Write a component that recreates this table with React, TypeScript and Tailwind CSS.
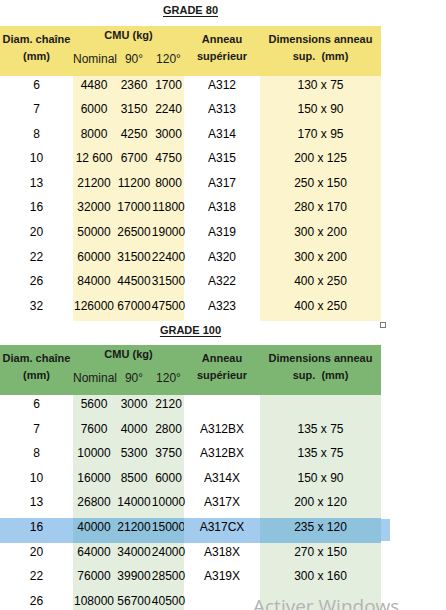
/**
 * Tableau élingues - Grade 80 / Grade 100
 * Feuille type Excel avec colonnes CMU et anneaux
 */

type Row = {
  diam: string;
  nominal: string;
  d90: string;
  d120: string;
  anneau: string;
  dims: string;
  selected?: boolean;
};

const grade80: Row[] = [
  { diam: '6', nominal: '4480', d90: '2360', d120: '1700', anneau: 'A312', dims: '130 x 75' },
  { diam: '7', nominal: '6000', d90: '3150', d120: '2240', anneau: 'A313', dims: '150 x 90' },
  { diam: '8', nominal: '8000', d90: '4250', d120: '3000', anneau: 'A314', dims: '170 x 95' },
  { diam: '10', nominal: '12 600', d90: '6700', d120: '4750', anneau: 'A315', dims: '200 x 125' },
  { diam: '13', nominal: '21200', d90: '11200', d120: '8000', anneau: 'A317', dims: '250 x 150' },
  { diam: '16', nominal: '32000', d90: '17000', d120: '11800', anneau: 'A318', dims: '280 x 170' },
  { diam: '20', nominal: '50000', d90: '26500', d120: '19000', anneau: 'A319', dims: '300 x 200' },
  { diam: '22', nominal: '60000', d90: '31500', d120: '22400', anneau: 'A320', dims: '300 x 200' },
  { diam: '26', nominal: '84000', d90: '44500', d120: '31500', anneau: 'A322', dims: '400 x 250' },
  { diam: '32', nominal: '126000', d90: '67000', d120: '47500', anneau: 'A323', dims: '400 x 250' },
];

const grade100: Row[] = [
  { diam: '6', nominal: '5600', d90: '3000', d120: '2120', anneau: '', dims: '' },
  { diam: '7', nominal: '7600', d90: '4000', d120: '2800', anneau: 'A312BX', dims: '135 x 75' },
  { diam: '8', nominal: '10000', d90: '5300', d120: '3750', anneau: 'A312BX', dims: '135 x 75' },
  { diam: '10', nominal: '16000', d90: '8500', d120: '6000', anneau: 'A314X', dims: '150 x 90' },
  { diam: '13', nominal: '26800', d90: '14000', d120: '10000', anneau: 'A317X', dims: '200 x 120' },
  { diam: '16', nominal: '40000', d90: '21200', d120: '15000', anneau: 'A317CX', dims: '235 x 120', selected: true },
  { diam: '20', nominal: '64000', d90: '34000', d120: '24000', anneau: 'A318X', dims: '270 x 150' },
  { diam: '22', nominal: '76000', d90: '39900', d120: '28500', anneau: 'A319X', dims: '300 x 160' },
  { diam: '26', nominal: '108000', d90: '56700', d120: '40500', anneau: '', dims: '' },
];

function Header({ green }: { green?: boolean }) {
  return (
    <div
      className={`grid grid-cols-[73px_111px_76px_121px] h-[49.5px] text-[11px] font-bold text-[#1a1a1a] ${
        green ? 'bg-[#7db672]' : 'bg-[#f4e27b]'
      }`}
    >
      <div className="pt-[5px] text-center leading-[17px] whitespace-nowrap">
        Diam. chaîne
        <br />
        (mm)
      </div>
      <div className="pt-[1px] leading-[17px]">
        <div className="text-center">CMU (kg)</div>
        <div className="mt-[7px] grid grid-cols-[42px_38px_31px] text-[12px] font-normal">
          <span className="text-center">Nominal</span>
          <span className="text-center">90°</span>
          <span className="text-center">120°</span>
        </div>
      </div>
      <div className="pt-[5px] text-center leading-[17px]">
        Anneau
        <br />
        supérieur
      </div>
      <div className="pt-[5px] text-center leading-[17px] whitespace-pre">
        {'Dimensions anneau\nsup.  (mm)'}
      </div>
    </div>
  );
}

function DataRow({ row, green }: { row: Row; green?: boolean }) {
  const light = green ? 'bg-[#e3eedf]' : 'bg-[#fbf4cc]';
  const selWhite = 'bg-[#a2cbee]';
  const selTint = 'bg-[#8fc2dc]';
  return (
    <div className="relative grid grid-cols-[73px_111px_76px_121px] h-[24.6px] text-[12px] leading-[18px] text-black">
      <div className={`text-center ${row.selected ? selWhite : ''}`}>{row.diam}</div>
      <div className={`grid grid-cols-[42px_38px_31px] ${row.selected ? selTint : light}`}>
        <span className="flex justify-center whitespace-nowrap">{row.nominal}</span>
        <span className="flex justify-center whitespace-nowrap">{row.d90}</span>
        <span className="flex justify-center whitespace-nowrap">{row.d120}</span>
      </div>
      <div className={`text-center ${row.selected ? selWhite : ''}`}>{row.anneau}</div>
      <div className={`text-center ${row.selected ? selTint : light}`}>{row.dims}</div>
      {row.selected && (
        <div className="absolute left-full top-[1px] h-[22.5px] w-[9px] bg-[#a4cdf0]" />
      )}
    </div>
  );
}

export default function App() {
  return (
    <div className="relative h-[610px] w-[446px] overflow-hidden bg-white font-['Liberation_Sans',Arial,sans-serif]">
      <div className="w-[381px]">
        <div className="h-[26px] text-center text-[11px] font-bold leading-[20px] text-[#1a1a1a]">
          <span className="underline underline-offset-2">GRADE 80</span>
        </div>
        <Header />
        {grade80.map((r) => (
          <DataRow key={r.diam} row={r} />
        ))}

        <div className="relative h-[24px] text-center text-[11px] font-bold leading-[18px] text-[#1a1a1a]">
          <span className="underline underline-offset-2">GRADE 100</span>
          <div className="absolute left-[380px] top-[1px] h-[6px] w-[6px] border border-[#7a7a7a] bg-white" />
        </div>
        <Header green />
        {grade100.map((r) => (
          <DataRow key={r.diam} row={r} green />
        ))}
      </div>

      <div className="absolute left-[253px] top-[597px] font-['Open_Sans',sans-serif] text-[19px] leading-[18px] text-[#b3b3b3] whitespace-nowrap">
        Activer Windows
      </div>
    </div>
  );
}
